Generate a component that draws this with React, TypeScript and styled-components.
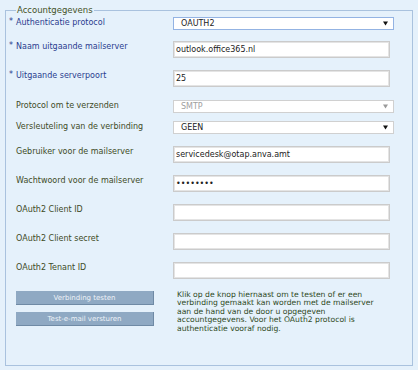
import styled, { createGlobalStyle } from 'styled-components';

const GlobalStyle = createGlobalStyle`
  html, body {
    margin: 0;
    padding: 0;
    background: #e5f1fb;
  }
  body {
    font-family: "DejaVu Sans", Verdana, sans-serif;
    font-size: 8px;
  }
`;

const Fieldset = styled.fieldset`
  margin: 5px 5px 0 5px;
  padding: 0 10px 0 10px;
  height: 361px;
  box-sizing: border-box;
  border: 1px solid #a9c2de;
  background: #e5f1fb;
`;

const Legend = styled.legend`
  color: #44521f;
  font-size: 8.5px;
  padding: 0 1px;
  margin-left: 0;
`;

const Rows = styled.div`
  display: flex;
  flex-direction: column;
  padding-top: 2px;
`;

const Row = styled.div<{ h: number }>`
  display: grid;
  grid-template-columns: 157px 1fr;
  align-items: start;
  height: ${p => p.h}px;
`;

const Label = styled.div<{ required?: boolean }>`
  line-height: 12px;
  color: ${p => (p.required ? '#2b3d8f' : '#3e4b26')};
  white-space: nowrap;
  position: relative;
`;

const Star = styled.span`
  position: absolute;
  left: -7px;
  top: -1px;
`;

const Select = styled.div<{ focused?: boolean; disabled?: boolean }>`
  width: 221px;
  height: 13px;
  box-sizing: border-box;
  background: #fff;
  border: 1px solid ${p => (p.focused ? '#93b3e3' : '#d0d0d0')};
  display: flex;
  align-items: center;
  justify-content: space-between;
  padding: 0 5px 0 7px;
  color: ${p => (p.disabled ? '#a0a0a0' : '#222')};
  font-size: 8px;
`;

const Arrow = styled.svg<{ disabled?: boolean }>`
  width: 5px;
  height: 5px;
  fill: ${p => (p.disabled ? '#9a9a9a' : '#111')};
`;

const Input = styled.input`
  width: 217px;
  height: 17px;
  box-sizing: border-box;
  margin: 0;
  background: #fff;
  border: 1px solid #cbcbcb;
  box-shadow: inset 0 0 0 1px #e4e4e4;
  padding: 0 2px;
  font-family: "DejaVu Sans", Verdana, sans-serif;
  font-size: 8px;
  color: #222;
  outline: none;
`;

const Bottom = styled.div`
  display: grid;
  grid-template-columns: 138px 1fr;
  column-gap: 23px;
  margin-top: 0;
`;

const Buttons = styled.div`
  display: flex;
  flex-direction: column;
  gap: 7px;
`;

const Button = styled.button`
  height: 14px;
  margin: 0;
  padding: 0;
  background: #8fa9c3;
  border: none;
  border-right: 1px solid #6f8aa5;
  border-bottom: 1px solid #6f8aa5;
  color: #eef3f8;
  font-family: "DejaVu Sans", Verdana, sans-serif;
  font-size: 7px;
`;

const Help = styled.p`
  margin: 0;
  color: #2f4a1d;
  font-size: 7.65px;
  line-height: 8.4px;
  width: 208px;
`;

const Caret = ({ disabled }: { disabled?: boolean }) => (
  <Arrow viewBox="0 0 6 5" disabled={disabled}>
    <polygon points="0,0 6,0 3,5" />
  </Arrow>
);

type Field =
  | { kind: 'select'; label: string; value: string; required?: boolean; focused?: boolean; disabled?: boolean; h: number }
  | { kind: 'input'; label: string; value: string; required?: boolean; type?: string; h: number };

const fields: Field[] = [
  { kind: 'select', label: 'Authenticatie protocol', value: 'OAUTH2', required: true, focused: true, h: 24 },
  { kind: 'input', label: 'Naam uitgaande mailserver', value: 'outlook.office365.nl', required: true, h: 29 },
  { kind: 'input', label: 'Uitgaande serverpoort', value: '25', required: true, h: 30 },
  { kind: 'select', label: 'Protocol om te verzenden', value: 'SMTP', disabled: true, h: 21 },
  { kind: 'select', label: 'Versleuteling van de verbinding', value: 'GEEN', h: 25 },
  { kind: 'input', label: 'Gebruiker voor de mailserver', value: 'servicedesk@otap.anva.amt', h: 29 },
  { kind: 'input', label: 'Wachtwoord voor de mailserver', value: 'geheim12', type: 'password', h: 29 },
  { kind: 'input', label: 'OAuth2 Client ID', value: '', h: 29 },
  { kind: 'input', label: 'OAuth2 Client secret', value: '', h: 29 },
  { kind: 'input', label: 'OAuth2 Tenant ID', value: '', h: 29 },
];

export default function App() {
  return (
    <>
      <GlobalStyle />
      <Fieldset>
        <Legend>Accountgegevens</Legend>
        <Rows>
          {fields.map(f => (
            <Row key={f.label} h={f.h}>
              <Label required={f.required}>
                {f.required && <Star>*</Star>}
                {f.label}
              </Label>
              {f.kind === 'select' ? (
                <Select focused={f.focused} disabled={f.disabled}>
                  <span>{f.value}</span>
                  <Caret disabled={f.disabled} />
                </Select>
              ) : (
                <Input type={f.type || 'text'} value={f.value} readOnly />
              )}
            </Row>
          ))}
        </Rows>
        <Bottom>
          <Buttons>
            <Button>Verbinding testen</Button>
            <Button>Test-e-mail versturen</Button>
          </Buttons>
          <Help>
            Klik op de knop hiernaast om te testen of er een verbinding gemaakt kan worden met de mailserver
            aan de hand van de door u opgegeven accountgegevens. Voor het OAuth2 protocol is authenticatie
            vooraf nodig.
          </Help>
        </Bottom>
      </Fieldset>
    </>
  );
}
